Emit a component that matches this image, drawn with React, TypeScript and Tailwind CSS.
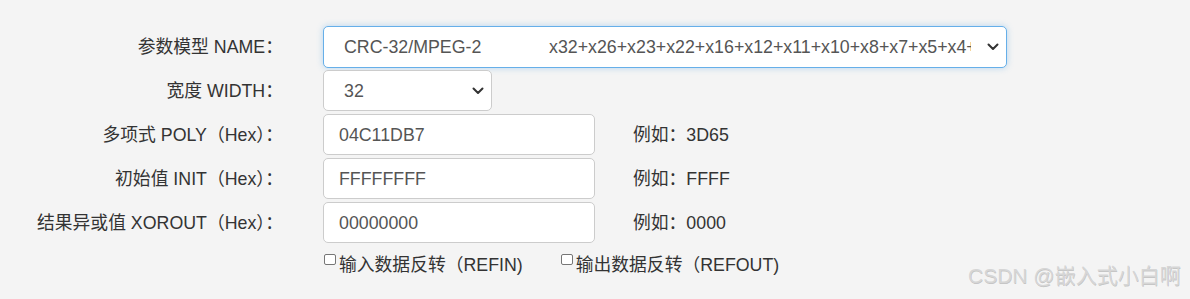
import React from "react";

const Chevron = () => (
  <svg width="12" height="8" viewBox="0 0 12 8" fill="none" className="shrink-0">
    <path d="M1.5 1.5 L6 6 L10.5 1.5" stroke="#333" strokeWidth="2" strokeLinecap="round" strokeLinejoin="round" />
  </svg>
);

const Label = ({ children }: { children: React.ReactNode }) => (
  <div className="w-[283px] text-right text-[#333] shrink-0">{children}</div>
);

const Row = ({ label, children }: { label: string; children: React.ReactNode }) => (
  <div className="flex items-center h-[41px]">
    <Label>{label}</Label>
    <div className="ml-[40px] flex items-center">{children}</div>
  </div>
);

const TextBox = ({ value }: { value: string }) => (
  <div className="w-[272px] h-[41px] bg-white border border-[#ccc] rounded-[5px] pl-[15px] flex items-center text-[#555]">
    {value}
  </div>
);

const Example = ({ v }: { v: string }) => (
  <div className="ml-[38px] text-[#333]">例如：{v}</div>
);

export default function App() {
  return (
    <div
      className="relative w-[1190px] h-[299px] bg-[#f4f4f4] overflow-hidden text-[17.8px] leading-[24px]"
      style={{ fontFamily: '"Liberation Sans", Arial, "Noto Sans CJK SC", sans-serif' }}
    >
      <div className="pt-[26px] flex flex-col gap-[3px]">
        <Row label="参数模型 NAME：">
          <div className="w-[684px] h-[42px] bg-white border border-[#66afe9] rounded-[5px] shadow-[0_0_6px_rgba(102,175,233,0.45)] flex items-center pl-[20px] pr-[7px] text-[#555]">
            <div className="w-[627px] overflow-hidden whitespace-nowrap">
              <span className="inline-block w-[205px]">CRC-32/MPEG-2</span>
              <span>x32+x26+x23+x22+x16+x12+x11+x10+x8+x7+x5+x4+x2+x+1</span>
            </div>
            <div className="flex-1" />
            <Chevron />
          </div>
        </Row>
        <Row label="宽度 WIDTH：">
          <div className="w-[169px] h-[41px] bg-white border border-[#ccc] rounded-[5px] flex items-center justify-between pl-[20px] pr-[7px] text-[#555]">
            <span>32</span>
            <Chevron />
          </div>
        </Row>
        <Row label="多项式 POLY（Hex）：">
          <TextBox value="04C11DB7" />
          <Example v="3D65" />
        </Row>
        <Row label="初始值 INIT（Hex）：">
          <TextBox value="FFFFFFFF" />
          <Example v="FFFF" />
        </Row>
        <Row label="结果异或值 XOROUT（Hex）：">
          <TextBox value="00000000" />
          <Example v="0000" />
        </Row>
        <div className="flex items-start mt-[7px] pl-[324px] text-[#333]">
          <label className="flex items-start">
            <span className="mt-[1px] w-[12px] h-[11px] border border-[#767676] rounded-[2px] bg-white" />
            <span className="ml-[3px]">输入数据反转（REFIN)</span>
          </label>
          <label className="flex items-start ml-[38px]">
            <span className="mt-[1px] w-[12px] h-[11px] border border-[#767676] rounded-[2px] bg-white" />
            <span className="ml-[3px]">输出数据反转（REFOUT)</span>
          </label>
        </div>
      </div>
      <div
        className="absolute left-[968px] top-[263px] text-[21px] leading-[26px] text-[#d6d6d6] whitespace-nowrap"
        style={{ textShadow: "0.5px 0.5px 0.5px rgba(0,0,0,0.2)" }}
      >
        CSDN @嵌入式小白啊
      </div>
    </div>
  );
}
